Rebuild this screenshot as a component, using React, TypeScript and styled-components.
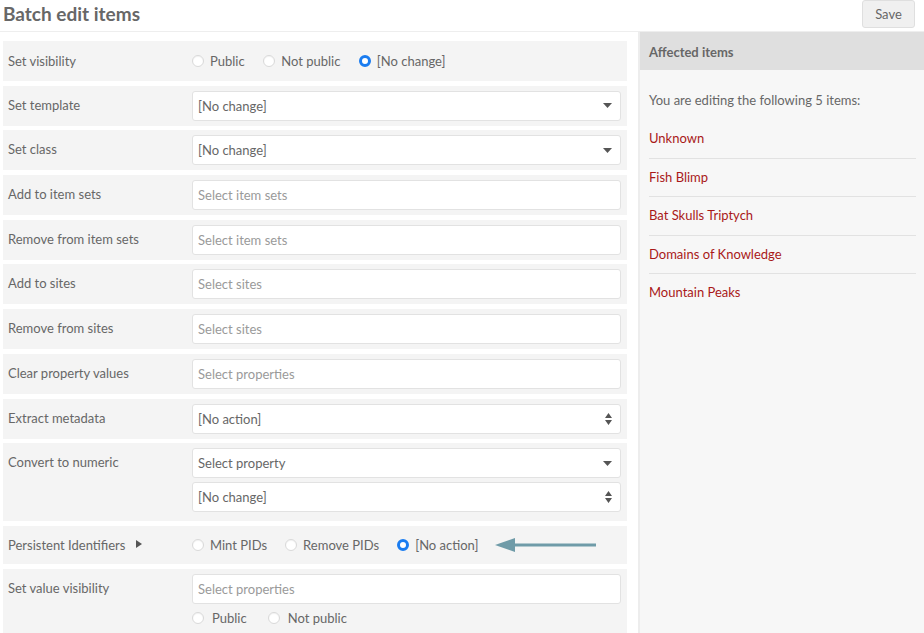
import React from "react";
import styled, { createGlobalStyle } from "styled-components";

const Global = createGlobalStyle`
  html, body { margin: 0; padding: 0; background: #fff; }
  body { font-family: Lato, "Open Sans", sans-serif; color: #676767; font-size: 13px; }
  * { box-sizing: border-box; }
`;

const Page = styled.div`
  width: 924px;
  height: 633px;
  overflow: hidden;
  display: flex;
  flex-direction: column;
`;

const Header = styled.header`
  height: 32px;
  flex: none;
  display: flex;
  align-items: flex-start;
  justify-content: space-between;
  border-bottom: 1px solid #eeeeee;
  padding: 0 9px 0 3px;
`;

const Title = styled.h1`
  margin: 0;
  font-size: 19px;
  line-height: 28px;
  font-weight: 700;
  color: #676767;
`;

const SaveButton = styled.button`
  font-family: inherit;
  font-size: 13px;
  color: #676767;
  background: #f0f0f0;
  border: 1px solid #dfdfdf;
  border-radius: 3px;
  height: 28px;
  width: 53px;
  padding: 0;
  margin-top: 0;
`;

const Body = styled.div`
  flex: 1;
  display: flex;
  min-height: 0;
`;

const Main = styled.main`
  width: 638px;
  flex: none;
  padding: 9px 11px 0 3px;
  display: flex;
  flex-direction: column;
  gap: 4.7px;
`;

const Row = styled.div<{ $padTop?: number; $padBottom?: number }>`
  display: grid;
  grid-template-columns: 184px 1fr;
  background: #f4f4f4;
  padding: ${(p) => p.$padTop ?? 5}px 6px ${(p) => p.$padBottom ?? 5}px 5px;
  flex: none;
`;

const Label = styled.div<{ $lh?: number }>`
  line-height: ${(p) => p.$lh ?? 28}px;
  color: #676767;
  display: flex;
  align-items: flex-start;
  gap: 11px;
`;

const Control = styled.div<{ $gap?: number }>`
  display: flex;
  flex-direction: column;
  gap: ${(p) => p.$gap ?? 4}px;
`;

const Field = styled.div<{ $placeholder?: boolean }>`
  height: 30px;
  background: #fff;
  border: 1px solid #e2e2e2;
  border-radius: 3px;
  display: flex;
  align-items: center;
  justify-content: space-between;
  padding: 0 8px 0 5px;
  color: ${(p) => (p.$placeholder ? "#9a9a9a" : "#676767")};
`;

const Radios = styled.div<{ $gap?: number; $h?: number }>`
  display: flex;
  align-items: center;
  height: ${(p) => p.$h ?? 30}px;
  gap: ${(p) => p.$gap ?? 18}px;
`;

const RadioItem = styled.label<{ $textGap?: number }>`
  display: flex;
  align-items: center;
  gap: ${(p) => p.$textGap ?? 6}px;
`;

const Circle = styled.span<{ $on?: boolean }>`
  width: 12px;
  height: 12px;
  border-radius: 50%;
  flex: none;
  background: #fff;
  border: ${(p) => (p.$on ? "3.5px solid #1a7cf0" : "1px solid #d9d9d9")};
  box-shadow: ${(p) => (p.$on ? "none" : "inset 0 1px 1px rgba(0,0,0,0.05)")};
`;

const Sidebar = styled.aside`
  flex: 1;
  background: #f7f7f7;
  border-left: 2px solid #ededed;
  display: flex;
  flex-direction: column;
`;

const SideHeader = styled.div`
  background: #dfdfdf;
  height: 38px;
  padding: 0 9px;
  font-weight: 700;
  line-height: 40px;
  color: #676767;
`;

const SideBody = styled.div`
  padding: 22px 8px 0 9px;
`;

const Intro = styled.p`
  margin: 0 0 12px;
  line-height: 16px;
`;

const ItemList = styled.ul`
  list-style: none;
  margin: 0;
  padding: 0;
`;

const Item = styled.li`
  color: #a91919;
  line-height: 37.5px;
  border-bottom: 1px solid #e2e2e2;
  &:last-child { border-bottom: none; }
`;

const Caret = () => (
  <svg width="9" height="5" viewBox="0 0 9 5"><path d="M0 0h9L4.5 5z" fill="#555" /></svg>
);

const UpDown = () => (
  <svg width="7" height="12" viewBox="0 0 7 12"><path d="M3.5 0L7 5H0zM3.5 12L0 7h7z" fill="#555" /></svg>
);

const Arrow = () => (
  <svg width="102" height="14" viewBox="0 0 102 14" style={{ marginLeft: -1 }}>
    <path d="M20 7H101" stroke="#6f9ba8" strokeWidth="3" />
    <path d="M0 7L20 0V14z" fill="#6f9ba8" />
  </svg>
);

const Tri = () => (
  <svg width="6" height="8" viewBox="0 0 6 8" style={{ marginTop: 10 }}><path d="M0 0L6 4L0 8z" fill="#555" /></svg>
);

type R = { label: string; on?: boolean; textGap?: number };
const RadioGroup = ({ items, gap, h }: { items: R[]; gap?: number; h?: number }) => (
  <Radios $gap={gap} $h={h}>
    {items.map((r) => (
      <RadioItem key={r.label} $textGap={r.textGap}>
        <Circle $on={r.on} />
        {r.label}
      </RadioItem>
    ))}
  </Radios>
);

const Select = ({ text, kind = "caret" }: { text: string; kind?: "caret" | "updown" }) => (
  <Field>
    {text}
    {kind === "caret" ? <Caret /> : <UpDown />}
  </Field>
);

const Multi = ({ text }: { text: string }) => <Field $placeholder>{text}</Field>;

export default function App() {
  return (
    <>
      <Global />
      <Page>
        <Header>
          <Title>Batch edit items</Title>
          <SaveButton>Save</SaveButton>
        </Header>
        <Body>
          <Main>
            <Row>
              <Label $lh={30}>Set visibility</Label>
              <RadioGroup
                gap={18.5}
                items={[{ label: "Public" }, { label: "Not public" }, { label: "[No change]", on: true }]}
              />
            </Row>
            <Row>
              <Label>Set template</Label>
              <Control><Select text="[No change]" /></Control>
            </Row>
            <Row>
              <Label>Set class</Label>
              <Control><Select text="[No change]" /></Control>
            </Row>
            <Row>
              <Label>Add to item sets</Label>
              <Control><Multi text="Select item sets" /></Control>
            </Row>
            <Row>
              <Label>Remove from item sets</Label>
              <Control><Multi text="Select item sets" /></Control>
            </Row>
            <Row>
              <Label>Add to sites</Label>
              <Control><Multi text="Select sites" /></Control>
            </Row>
            <Row>
              <Label>Remove from sites</Label>
              <Control><Multi text="Select sites" /></Control>
            </Row>
            <Row>
              <Label>Clear property values</Label>
              <Control><Multi text="Select properties" /></Control>
            </Row>
            <Row>
              <Label>Extract metadata</Label>
              <Control><Select text="[No action]" kind="updown" /></Control>
            </Row>
            <Row $padBottom={9}>
              <Label>Convert to numeric</Label>
              <Control>
                <Select text="Select property" />
                <Select text="[No change]" kind="updown" />
              </Control>
            </Row>
            <Row $padTop={4} $padBottom={4}>
              <Label $lh={30}>Persistent Identifiers <Tri /></Label>
              <Radios>
                <RadioItem><Circle />Mint PIDs</RadioItem>
                <RadioItem><Circle />Remove PIDs</RadioItem>
                <RadioItem><Circle $on />[No action]</RadioItem>
                <Arrow />
              </Radios>
            </Row>
            <Row>
              <Label>Set value visibility</Label>
              <Control $gap={3}>
                <Multi text="Select properties" />
                <RadioGroup
                  gap={21}
                  h={22}
                  items={[{ label: "Public", textGap: 8 }, { label: "Not public", textGap: 8 }]}
                />
              </Control>
            </Row>
          </Main>
          <Sidebar>
            <SideHeader>Affected items</SideHeader>
            <SideBody>
              <Intro>You are editing the following 5 items:</Intro>
              <ItemList>
                <Item>Unknown</Item>
                <Item>Fish Blimp</Item>
                <Item>Bat Skulls Triptych</Item>
                <Item>Domains of Knowledge</Item>
                <Item>Mountain Peaks</Item>
              </ItemList>
            </SideBody>
          </Sidebar>
        </Body>
      </Page>
    </>
  );
}
